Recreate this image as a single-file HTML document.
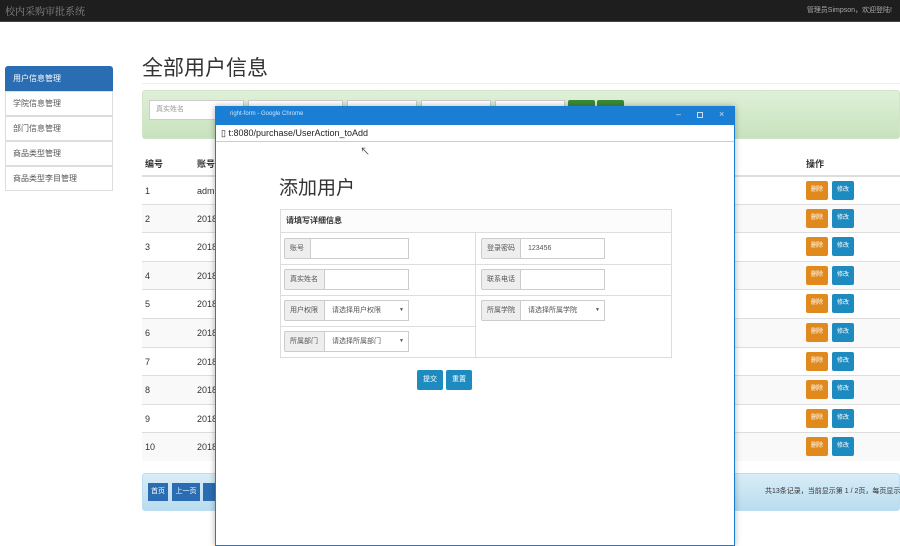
<!DOCTYPE html>
<html><head><meta charset="utf-8"><style>
*{box-sizing:border-box;margin:0;padding:0}
body{width:900px;height:540px;overflow:hidden;background:#fff;font-family:"Liberation Sans","Noto Sans CJK SC",sans-serif;position:relative;color:#333}
.abs{position:absolute}
.top{left:0;top:0;width:900px;height:22px;background:#1e1e1e;border-bottom:1px solid #444}
.side div{position:absolute;left:5px;width:108px;height:25px;border:1px solid #ddd;font-size:8px;line-height:24px;padding-left:7px;color:#555;background:#fff}
.tbl{font-size:9px}
.row{position:absolute;left:142px;width:758px;height:28.6px;border-top:1px solid #ddd}
.row span{position:absolute;top:9px}
.bd,.be{position:absolute;top:4px;width:22px;height:19px;border-radius:2px;color:#fff;font-size:6px;line-height:19px;text-align:center;font-style:normal}
.bd{left:664px;background:#e08a1e}
.be{left:690px;background:#1d8bbf}
.lab{position:absolute;height:21px;background:#eee;border:1px solid #ccc;font-size:7px;color:#555;line-height:19px;padding-left:5px;border-radius:2px 0 0 2px}
.inp{position:absolute;height:21px;background:#fff;border:1px solid #ccc;font-size:7px;color:#555;line-height:19px;padding-left:7px}
</style></head><body>
<div class="abs top"><span class="abs" style="left:5px;top:3px;font-size:10px;color:#888;font-family:'Noto Serif CJK SC',serif">校内采购审批系统</span><span class="abs" style="right:8px;top:5px;font-size:7px;color:#aaa">管理员Simpson，欢迎登陆!</span></div>
<div class="side">
<div style="top:66px;background:#2a6db3;color:#fff;border-color:#2a6db3;border-radius:3px 3px 0 0">用户信息管理</div>
<div style="top:91px">学院信息管理</div>
<div style="top:116px">部门信息管理</div>
<div style="top:141px">商品类型管理</div>
<div style="top:166px">商品类型李目管理</div>
</div>
<div class="abs" style="left:142px;top:52px;font-size:21px;color:#333">全部用户信息</div>
<div class="abs" style="left:142px;top:83px;width:758px;height:1px;background:#eee"></div>
<div class="abs" style="left:142px;top:90px;width:758px;height:49px;background:linear-gradient(#dff0d8,#c8e2bd);border:1px solid #d0e6c6;border-radius:3px"></div>
<div class="abs" style="left:149px;top:100px;width:95px;height:20px;background:#fff;border:1px solid #ccc;font-size:7px;color:#999;line-height:18px;padding-left:6px">真实姓名</div>
<div class="abs" style="left:248px;top:100px;width:95px;height:20px;background:#fff;border:1px solid #ccc"></div>
<div class="abs" style="left:347px;top:100px;width:70px;height:20px;background:#fff;border:1px solid #ccc"></div>
<div class="abs" style="left:421px;top:100px;width:70px;height:20px;background:#fff;border:1px solid #ccc"></div>
<div class="abs" style="left:495px;top:100px;width:70px;height:20px;background:#fff;border:1px solid #ccc"></div>
<div class="abs" style="left:568px;top:100px;width:27px;height:20px;background:#3a8a3a;border-radius:2px"></div>
<div class="abs" style="left:597px;top:100px;width:27px;height:20px;background:#3a8a3a;border-radius:2px"></div>
<div class="tbl">
<div class="abs" style="left:145px;top:157px;font-weight:bold;font-size:9px">编号</div>
<div class="abs" style="left:197px;top:157px;font-weight:bold;font-size:9px">账号</div>
<div class="abs" style="left:806px;top:157px;font-weight:bold;font-size:9px">操作</div>
<div class="row" style="top:175px;border-top:2px solid #ddd"><span style="left:3px">1</span><span style="left:55px">admin</span><i class="bd">删除</i><i class="be">修改</i></div>
<div class="row" style="top:203.6px;background:#f9f9f9"><span style="left:3px">2</span><span style="left:55px">2018</span><i class="bd">删除</i><i class="be">修改</i></div>
<div class="row" style="top:232.2px"><span style="left:3px">3</span><span style="left:55px">2018</span><i class="bd">删除</i><i class="be">修改</i></div>
<div class="row" style="top:260.8px;background:#f9f9f9"><span style="left:3px">4</span><span style="left:55px">2018</span><i class="bd">删除</i><i class="be">修改</i></div>
<div class="row" style="top:289.4px"><span style="left:3px">5</span><span style="left:55px">2018</span><i class="bd">删除</i><i class="be">修改</i></div>
<div class="row" style="top:318px;background:#f9f9f9"><span style="left:3px">6</span><span style="left:55px">2018</span><i class="bd">删除</i><i class="be">修改</i></div>
<div class="row" style="top:346.6px"><span style="left:3px">7</span><span style="left:55px">2018</span><i class="bd">删除</i><i class="be">修改</i></div>
<div class="row" style="top:375.2px;background:#f9f9f9"><span style="left:3px">8</span><span style="left:55px">2018</span><i class="bd">删除</i><i class="be">修改</i></div>
<div class="row" style="top:403.8px"><span style="left:3px">9</span><span style="left:55px">2018</span><i class="bd">删除</i><i class="be">修改</i></div>
<div class="row" style="top:432.4px;background:#f9f9f9"><span style="left:3px">10</span><span style="left:55px">2018</span><i class="bd">删除</i><i class="be">修改</i></div>
</div>
<div class="abs" style="left:142px;top:473px;width:758px;height:38px;background:linear-gradient(#d9edf7,#b9dcef);border:1px solid #bcdff1;border-radius:3px"></div>
<div class="abs" style="left:148px;top:483px;width:20px;height:18px;background:#2a6db3;color:#fff;font-size:7px;line-height:18px;text-align:center">首页</div>
<div class="abs" style="left:172px;top:483px;width:28px;height:18px;background:#2a6db3;color:#fff;font-size:7px;line-height:18px;text-align:center">上一页</div>
<div class="abs" style="left:203px;top:483px;width:14px;height:18px;background:#2a6db3"></div>
<div class="abs" style="left:765px;top:486px;font-size:7px;color:#333;white-space:nowrap">共13条记录，当前显示第 1 / 2页，每页显示</div>
<!-- popup -->
<div class="abs" style="left:215px;top:106px;width:520px;height:440px;background:#fff;border:1px solid #1a7fd4;box-shadow:0 0 6px rgba(0,0,0,.3)">
<div class="abs" style="left:0;top:0;width:518px;height:18px;background:#1a7fd4"><span class="abs" style="left:14px;top:4px;font-size:6px;color:#cfe4f8">right-form - Google Chrome</span><span class="abs" style="left:460px;top:2px;font-size:9px;color:#cde">–</span><span class="abs" style="left:481px;top:5px;width:6px;height:6px;border:1px solid #cde"></span><span class="abs" style="left:503px;top:2px;font-size:9px;color:#cde">×</span></div>
<div class="abs" style="left:0;top:18px;width:518px;height:17px;border-bottom:1px solid #ccc"><span class="abs" style="left:5px;top:3px;font-size:9px;color:#222">▯ t:8080/purchase/UserAction_toAdd</span></div>
<div class="abs" style="left:63px;top:66px;font-size:19px;color:#333">添加用户</div>
<div class="abs" style="left:64px;top:102px;width:392px;height:149px;border:1px solid #ddd"></div>
<div class="abs" style="left:64px;top:102px;width:392px;height:24px;border:1px solid #ddd;font-size:8px;font-weight:bold;line-height:22px;padding-left:5px;background:#fcfcfc">请填写详细信息</div>
<div class="abs" style="left:64px;top:157px;width:392px;height:1px;background:#ddd"></div>
<div class="abs" style="left:64px;top:188px;width:392px;height:1px;background:#ddd"></div>
<div class="abs" style="left:64px;top:219px;width:196px;height:1px;background:#ddd"></div>
<div class="abs" style="left:259px;top:126px;width:1px;height:125px;background:#ddd"></div>
<div class="lab" style="left:68px;top:131px;width:27px">账号</div><div class="inp" style="left:94px;top:131px;width:99px"></div>
<div class="lab" style="left:265px;top:131px;width:40px">登录密码</div><div class="inp" style="left:304px;top:131px;width:85px">123456</div>
<div class="lab" style="left:68px;top:162px;width:41px">真实姓名</div><div class="inp" style="left:108px;top:162px;width:85px"></div>
<div class="lab" style="left:265px;top:162px;width:40px">联系电话</div><div class="inp" style="left:304px;top:162px;width:85px"></div>
<div class="lab" style="left:68px;top:193px;width:41px">用户权限</div><div class="inp" style="left:108px;top:193px;width:85px">请选择用户权限<span style="position:absolute;right:4px;font-size:5px">▼</span></div>
<div class="lab" style="left:265px;top:193px;width:40px">所属学院</div><div class="inp" style="left:304px;top:193px;width:85px">请选择所属学院<span style="position:absolute;right:4px;font-size:5px">▼</span></div>
<div class="lab" style="left:68px;top:224px;width:41px">所属部门</div><div class="inp" style="left:108px;top:224px;width:85px">请选择所属部门<span style="position:absolute;right:4px;font-size:5px">▼</span></div>
<div class="abs" style="left:201px;top:263px;width:26px;height:20px;background:#1d8bbf;border-radius:2px;color:#fff;font-size:7px;line-height:20px;text-align:center">提交</div>
<div class="abs" style="left:230px;top:263px;width:26px;height:20px;background:#1d8bbf;border-radius:2px;color:#fff;font-size:7px;line-height:20px;text-align:center">重置</div>
</div>
<div class="abs" style="left:360px;top:143px;font-size:10px;color:#444">↖</div>
</body></html>
